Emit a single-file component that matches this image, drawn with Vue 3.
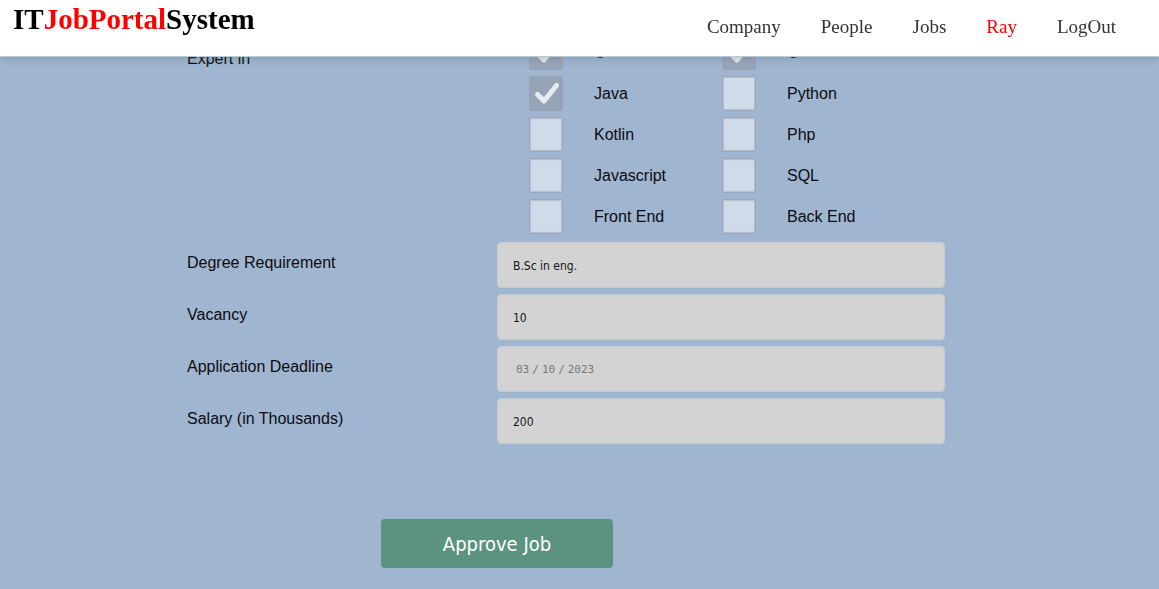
<script setup>
import { ref } from 'vue'

const navLinks = [
  { label: 'Company' },
  { label: 'People' },
  { label: 'Jobs' },
  { label: 'Ray', active: true },
  { label: 'LogOut' },
]

const skills = ref([
  { label: 'C', checked: true },
  { label: 'C++', checked: true },
  { label: 'Java', checked: true },
  { label: 'Python', checked: false },
  { label: 'Kotlin', checked: false },
  { label: 'Php', checked: false },
  { label: 'Javascript', checked: false },
  { label: 'SQL', checked: false },
  { label: 'Front End', checked: false },
  { label: 'Back End', checked: false },
])

const fields = ref([
  { id: 'degree', label: 'Degree Requirement', type: 'text', value: 'B.Sc in eng.' },
  { id: 'vacancy', label: 'Vacancy', type: 'text', value: '10' },
  { id: 'deadline', label: 'Application Deadline', type: 'date', value: '2023-03-10' },
  { id: 'salary', label: 'Salary (in Thousands)', type: 'text', value: '200' },
])
</script>

<template>
  <div class="page">
    <header class="topbar">
      <a class="logo" href="#">IT<span class="accent">JobPortal</span>System</a>
      <nav class="nav">
        <a v-for="link in navLinks" :key="link.label" href="#" :class="{ accent: link.active }">{{ link.label }}</a>
      </nav>
    </header>

    <form class="form" @submit.prevent>
      <fieldset class="row skills-row" aria-labelledby="expert">
        <span id="expert" class="label">Expert in</span>
        <div class="skills">
          <label v-for="skill in skills" :key="skill.label" class="skill">
            <span class="tick">
              <input v-model="skill.checked" type="checkbox" />
              <svg v-if="skill.checked" viewBox="0 0 34 35" aria-hidden="true">
                <path d="M8.5 18.5L15 25L27.5 9.5" />
              </svg>
            </span>
            <span>{{ skill.label }}</span>
          </label>
        </div>
      </fieldset>

      <div v-for="field in fields" :key="field.id" class="row">
        <label class="label" :for="field.id">{{ field.label }}</label>
        <input :id="field.id" v-model="field.value" class="field" :type="field.type" />
      </div>

      <button class="approve" type="submit">Approve Job</button>
    </form>
  </div>
</template>

<style>
html {
  background: #9fb5d0;
}
</style>

<style scoped>
.page {
  min-height: 100vh;
  box-sizing: border-box;
  background: #9fb5d0;
  color: #0c0c10;
  font: 16px/18px "Liberation Sans", Arial, sans-serif;
}

.topbar {
  position: fixed;
  z-index: 1;
  top: 0;
  left: 0;
  right: 0;
  display: flex;
  justify-content: space-between;
  box-sizing: border-box;
  height: 57px;
  padding: 0 43px 0 13px;
  border-bottom: 1px solid #bccad6;
  background: #fff;
  box-shadow: 0 1px 8px rgba(90, 110, 110, 0.4);
  font-family: "Liberation Serif", "Times New Roman", serif;
}

.logo {
  color: #000;
  font-size: 29px;
  font-weight: bold;
  line-height: 38px;
  text-decoration: none;
}

.nav {
  display: flex;
  gap: 40px;
}

.nav a {
  color: #333;
  font-size: 19px;
  line-height: 54px;
  text-decoration: none;
}

.logo .accent,
.nav .accent {
  color: #f00;
}

.form {
  display: flex;
  flex-direction: column;
  gap: 6px;
  padding: 35px 214px 20px 187px;
}

.row {
  display: grid;
  grid-template-columns: 310px 1fr;
  margin: 0;
  padding: 0;
  border: 0;
}

.label {
  padding-top: 12px;
}

.skills-row {
  margin-bottom: 2px;
}

.skills-row .label {
  padding-top: 15px;
}

.skills {
  display: grid;
  grid-template-columns: 193px 1fr;
  row-gap: 6px;
  padding-left: 32px;
}

.skill {
  display: flex;
  align-items: center;
  gap: 31px;
  height: 35px;
}

.tick {
  position: relative;
  width: 34px;
  height: 35px;
}

.tick input {
  display: block;
  appearance: none;
  box-sizing: border-box;
  width: 34px;
  height: 35px;
  margin: 0;
  border: 1px solid #9ca7bc;
  border-radius: 2px;
  background: #cfdbe8;
  box-shadow: inset 0 0 1px 1px #b3bdcc;
}

.tick input:checked {
  border-color: #97a4b8;
  background: #97a4b8;
  box-shadow: none;
}

.tick svg {
  position: absolute;
  inset: 0;
  pointer-events: none;
}

.tick path {
  fill: none;
  stroke: #e8ecf1;
  stroke-width: 5;
  stroke-linecap: round;
  stroke-linejoin: round;
}

.field {
  box-sizing: border-box;
  width: 100%;
  min-width: 0;
  height: 46px;
  margin: 0;
  padding: 1px 15px 0;
  border: 1px solid #c5cad0;
  border-radius: 4px;
  background: #d3d3d3;
  color: #16161c;
  font: 12px/16px "DejaVu Sans Condensed", "DejaVu Sans", Tahoma, sans-serif;
}

.field[type="date"] {
  padding-left: 17px;
  color: #777;
  font: 11px/16px "DejaVu Sans Mono", monospace;
}

.field::-webkit-calendar-picker-indicator {
  display: none;
}

.field::-webkit-datetime-edit-text {
  padding: 0 2px;
}

.approve {
  width: 232px;
  height: 49px;
  margin: 69px 0 0 194px;
  padding: 0;
  border: 0;
  border-radius: 4px;
  background: #5b9280;
  color: #fff;
  font: 20px/24px "DejaVu Sans Condensed", "DejaVu Sans", Tahoma, sans-serif;
}
</style>
